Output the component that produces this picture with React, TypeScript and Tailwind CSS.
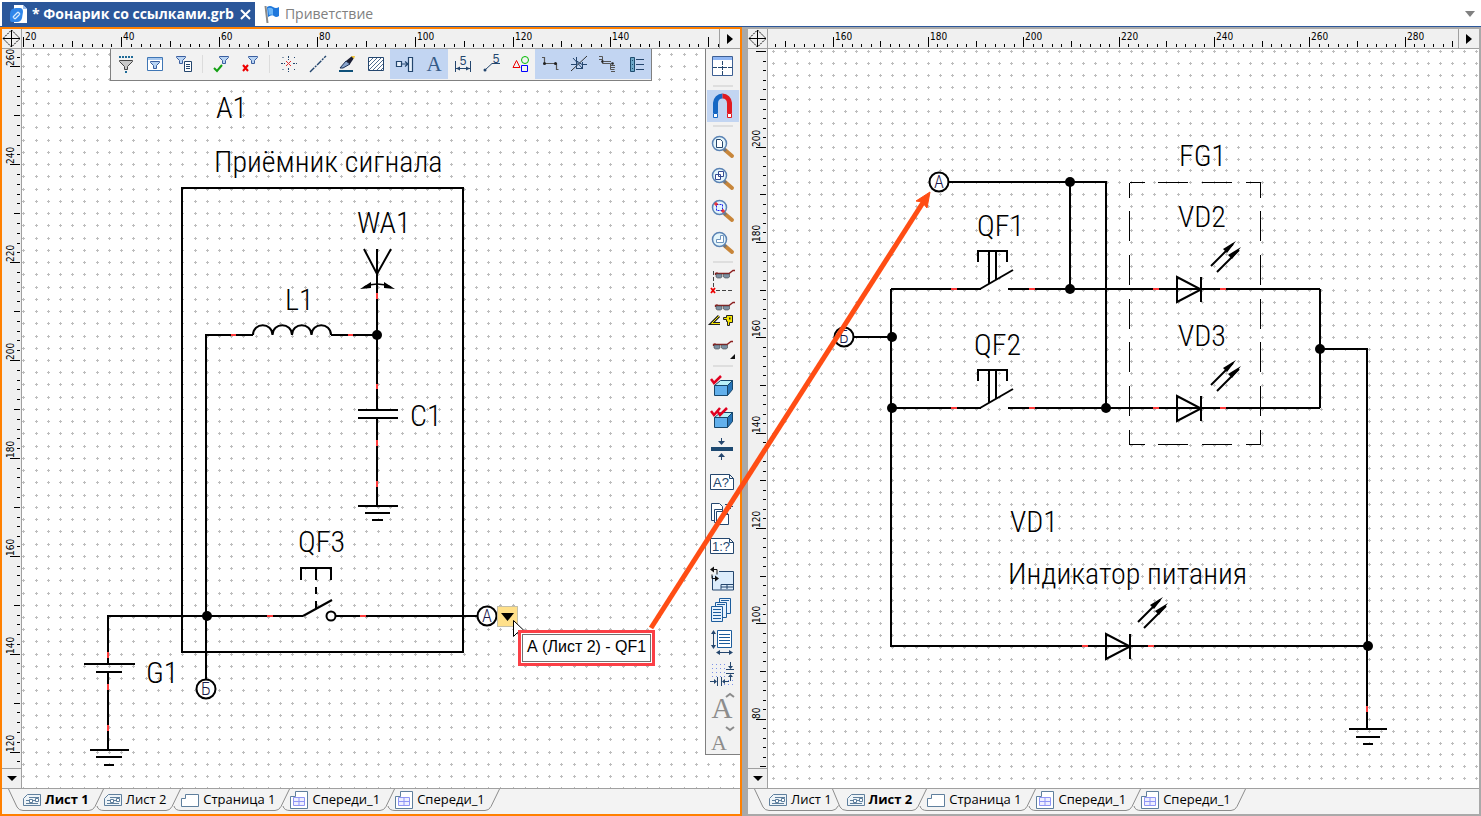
import React, {useLayoutEffect, useRef, useState} from "react";

type Tool = { name: string; icon: React.ReactNode; active?: boolean };
type Sheet = { title: string; kind: "scheme" | "page" | "view"; active?: boolean };

const INK = "#24466e";

// ---------- toolbar icons, 24x24 ----------

const Funnel = ({x = 0, y = 0}: { x?: number; y?: number }) => (
    <path
        transform={`translate(${x} ${y})`}
        d="M0.5 0.5h9v1l-3 3v3h-3v-3l-3-3z"
        fill="#b9d4f3"
        stroke="#3b5fa0"
    />
);

const filterTools: Tool[] = [
    {
        name: "Фильтр", icon: <>
            <path d="M5 5h2M8 5h2M11 5h2M14 5h2M17 5h2" stroke="#1f6a97" strokeWidth="2"/>
            <path d="M5.5 8.5h13v1l-5 5v3h-3v-3l-5-5z" fill="#c9c9c9" stroke="#444"/>
            <path d="M11 20h2" stroke="#1f6a97" strokeWidth="2"/>
        </>
    },
    {
        name: "Окно фильтра", icon: <>
            <path d="M4.5 5.5h15v13h-15z" fill="#fff" stroke="#3f76b5"/>
            <path d="M5 7h14" stroke="#a8c8ee" strokeWidth="2"/>
            <Funnel x={7} y={9}/>
        </>
    },
    {
        name: "Список фильтров", icon: <>
            <Funnel x={4} y={4}/>
            <path d="M12.5 9.5h7v10h-7z" fill="#fff" stroke={INK}/>
            <path d="M14 12.5h4M14 14.5h4M14 16.5h4" stroke={INK}/>
        </>
    },
];

const applyTools: Tool[] = [
    {
        name: "Применить фильтр", icon: <>
            <Funnel x={9} y={4}/>
            <path d="M4 16l3 3 5-6" fill="none" stroke="#13a013" strokeWidth="2"/>
        </>
    },
    {
        name: "Сбросить фильтр", icon: <>
            <Funnel x={9} y={4}/>
            <path d="M4 13l5 6M9 13l-5 6" stroke="#e00" strokeWidth="2"/>
        </>
    },
];

const drawTools: Tool[] = [
    {
        name: "Узел", icon: <>
            <path d="M11.5 4v4M11.5 16v4M4 11.5h4M16 11.5h4" stroke={INK} strokeDasharray="2 1"/>
            <path d="M9 9l5 5M14 9l-5 5" stroke="#e23030"/>
            <path d="M5.500 5.500h1M17 5.500h1M5.500 17.500h1M17 17.500h1" stroke={INK}/>
        </>
    },
    {name: "Линия", icon: <path d="M4 20L20 4" stroke={INK} strokeWidth="1.4" strokeDasharray="6 1 2 1"/>},
    {
        name: "Перо", icon: <>
            <path d="M5 16l6-7 4 3-7 4z" fill="#8ba6cf" stroke="#1b2f55"/>
            <path d="M11 9l6-5 2 2-4 6z" fill="#1b1f35"/>
            <path d="M16 4l3 3 1-3z" fill="#f3c63b"/>
            <path d="M4 19h14" stroke="#0e5079" strokeWidth="2"/>
        </>
    },
    {
        name: "Штриховка", icon: <>
            <path d="M4.5 5.5h15v13h-15z" fill="#fff" stroke={INK}/>
            <path d="M5 10l4-4M5 14l8-8M5 18l12-12M9 18l10-10M13 18l6-6M17 18l2-2" stroke={INK} strokeWidth="0.8"/>
        </>
    },
    {
        name: "Вывод", active: true, icon: <>
            <path d="M3.5 9.5h5v5h-5zM15.5 5.5h4v14h-4z" fill="#e8f1fb" stroke={INK} strokeWidth="1.2"/>
            <path d="M9 12h6M12 9.5l3 2.5-3 2.5" fill="none" stroke={INK} strokeWidth="1.2"/>
        </>
    },
    {
        name: "Текст", active: true,
        icon: <text x="12" y="19" textAnchor="middle" fontSize="21" fontFamily="Liberation Serif, serif" fill="#355b87">A</text>
    },
    {
        name: "Размер", icon: <>
            <path d="M4.5 9v11M19.5 9v11M5 16.5h14" stroke={INK}/>
            <path d="M5 16.5l4-2v4zM19 16.5l-4-2v4z" fill={INK}/>
            <text x="12" y="13" textAnchor="middle" fontSize="12" fontFamily="Liberation Sans, sans-serif" fill={INK}>5</text>
        </>
    },
    {
        name: "Выноска", icon: <>
            <path d="M5 18l7-6.5h8" fill="none" stroke={INK}/>
            <circle cx="5" cy="18" r="1.5" fill={INK}/>
            <text x="16" y="11" textAnchor="middle" fontSize="12" fontFamily="Liberation Sans, sans-serif" fill={INK}>5</text>
        </>
    },
    {
        name: "Фигуры", icon: <>
            <path d="M7.5 8.5l3.5 7h-7z" fill="none" stroke="#e00"/>
            <circle cx="16" cy="8" r="3.5" fill="none" stroke="#0b0"/>
            <path d="M12.5 13.5h6v6h-6z" fill="none" stroke="#00f"/>
        </>
    },
    {
        name: "Соединение", active: true, icon: <>
            <path d="M4 5.5h2.5v6h12v6h2" fill="none" stroke="#555" strokeWidth="1.2"/>
            <circle cx="6.5" cy="11.5" r="1.5" fill="#222"/>
            <circle cx="17.5" cy="11.5" r="1.5" fill="#222"/>
        </>
    },
    {
        name: "Разрыв", active: true, icon: <>
            <path d="M4 19L20 4" stroke="#333"/>
            <path d="M4 12.5h5M15 12.5h5M9.500 5v11M9 16.500h7M6 6l9.500 10.500V10M9 8.500l6 4" fill="none" stroke={INK}/>
        </>
    },
    {
        name: "Шина", active: true, icon: <>
            <path d="M3 4.5h3.5v5M3 7.5h3M6.5 9.5v2h8v6h4M8 9.5h7M15 13.5h4M15 15.5h4M15 19.5h4" fill="none" stroke="#555"/>
            <circle cx="6.5" cy="9.5" r="1.3" fill="#222"/>
            <circle cx="16.5" cy="11.5" r="1.3" fill="#222"/>
        </>
    },
    {
        name: "Разъём", active: true, icon: <>
            <path d="M5.5 5.5h4v14h-4z" fill="#6ea9c9" stroke="#1e4c6e"/>
            <path d="M7 8.5h1M7 12.5h1M7 16.5h1" stroke="#1e4c6e"/>
            <path d="M11 7.5h8M11 12.5h8M11 17.5h8" stroke={INK}/>
        </>
    },
];

// ---------- side bar icons, 32x32 ----------

const Lens = ({children}: { children: React.ReactNode }) => (
    <>
        <path d="M19 20l7 6" stroke="#c8863a" strokeWidth="4" strokeLinecap="round"/>
        <path d="M18 19l2 2" stroke="#777" strokeWidth="3"/>
        <circle cx="13.5" cy="13.5" r="7" fill="#e4f5fb" stroke="#5b83b4" strokeWidth="1.5"/>
        {children}
    </>
);

const Glasses = ({x = 0, y = 0}: { x?: number; y?: number }) => (
    <g transform={`translate(${x} ${y})`}>
        <path d="M0.5 5V3.5h13.5l4-3h2M0.5 3.5l2-1" fill="none" stroke="#8c1f1f" strokeWidth="1.3"/>
        <path d="M1 4h6v3l-1.5 1h-3L1 7zM8.5 4h6v3L13 8h-3L8.5 7z" fill="#7c90a3" stroke="#444" strokeWidth="0.6"/>
    </g>
);

const Cube = () => (
    <>
        <path d="M8.5 15.5l6-5h12l-5 5z" fill="#b8f0f8" stroke="#17466b"/>
        <path d="M21.5 15.5l5-5v9l-5 6z" fill="#2674b8" stroke="#17466b"/>
        <path d="M8.5 15.5h13v10h-13z" fill="#62b0ec" stroke="#17466b"/>
    </>
);

const Sign = ({text}: { text: string }) => (
    <>
        <path d="M4.5 8.5h19l4 4v11h-23zM23.5 8.5v4h4" fill="#fff" stroke={INK}/>
        <text x="15" y="21" textAnchor="middle" fontSize="13" fontFamily="Liberation Sans, sans-serif" fill={INK}>{text}</text>
    </>
);

const sideTools: Tool[][] = [
    [{
        name: "Таблица", icon: <>
            <path d="M6.5 6.5h20v19h-20z" fill="#fff" stroke="#3d5f93"/>
            <path d="M7 8.5h19" stroke="#8fb6f4" strokeWidth="3"/>
            <path d="M16.5 11v14M7 17.5h19" stroke={INK} strokeDasharray="4 1"/>
        </>
    }],
    [{
        name: "Привязка", active: true, icon: <>
            <path d="M9.500 23V13a7 7.500 0 0 1 7-7" fill="none" stroke="#1667c4" strokeWidth="5"/>
            <path d="M23.500 23V13a7 7.500 0 0 0-7-7" fill="none" stroke="#e01b22" strokeWidth="5"/>
            <path d="M7.500 23.500h4v4h-4z" fill="#fff" stroke="#1667c4"/>
            <path d="M21.500 23.500h4v4h-4z" fill="#fff" stroke="#e01b22"/>
        </>
    }],
    [
        {name: "Показать лист", icon: <Lens><path d="M10.5 9.5h4l2 2v6h-6z" fill="#fff" stroke={INK}/></Lens>},
        {name: "Показать всё", icon: <Lens><path d="M12.5 9.5h5v5h-5zM9.5 12.5h5v5h-5z" fill="#fff" stroke="#334a92"/></Lens>},
        {
            name: "Увеличить область", icon: <Lens>
                <path d="M10.5 10.5h6v6h-6z" fill="none" stroke="#22e" strokeDasharray="2 1"/>
                <path d="M8 10h4M10 8v4M15 17h4M17 15v4" stroke="#e00"/>
            </Lens>
        },
        {name: "Предыдущий вид", icon: <Lens><path d="M14.5 9.5h3v7h-7v-3h4z" fill="#fff" stroke="#6f94bd"/></Lens>},
    ],
    [
        {
            name: "Скрыть построения", icon: <>
                <path d="M7.5 5v18M10 24.5h18" stroke="#444" strokeDasharray="4 2"/>
                <Glasses x={9} y={4}/>
                <path d="M5 22l4 5M9 22l-4 5" stroke="#e00" strokeWidth="1.8"/>
            </>
        },
        {
            name: "Видимость по типу", icon: <>
                <Glasses x={9} y={4}/>
                <path d="M13 18L5.500 25.500H14" fill="none" stroke="#222" strokeWidth="3"/>
                <path d="M13 18L5.500 25.500H14" fill="none" stroke="#f6e600"/>
                <path d="M17.500 19.500h3v-2h6v7h-3v3h-2v-4h-1v-2h-3z" fill="#f6e600" stroke="#222"/>
                <path d="M23 20.500h1.500" stroke="#222" strokeWidth="2"/>
            </>
        },
        {
            name: "Видимость", icon: <>
                <Glasses x={7} y={11}/>
                <path d="M29 24v5h-5z" fill="#111"/>
            </>
        },
    ],
    [
        {name: "Проверить", icon: <><Cube/><path d="M5 9l3 4 7-7" fill="none" stroke="#e00020" strokeWidth="2.500"/></>},
        {name: "Проверить всё", icon: <><Cube/><path d="M5 9l3 4 6-7M12 10l2 3 7-7" fill="none" stroke="#e00020" strokeWidth="2.500"/></>},
        {
            name: "Толщина линий", icon: <>
                <path d="M5 15h22" stroke="#1d4971" strokeWidth="4"/>
                <path d="M15.5 4v6M15.5 26v-6" stroke={INK}/>
                <path d="M12 7h7l-3.5 4zM12 23h7l-3.5-4z" fill={INK}/>
            </>
        },
        {name: "Обозначение", icon: <Sign text="A?"/>},
        {
            name: "Копировать листы", icon: <>
                <path d="M5.5 5.500h8l3 3v14h-11z" fill="#fff" stroke={INK}/>
                <path d="M8.500 11.500h8v13h-8z" fill="#fff" stroke={INK}/>
                <path d="M10.500 13.500h9l3 3v10h-12zM19.500 13.500v3h3" fill="#fff" stroke={INK}/>
                <path d="M19 6.500h5.500V11M22 8.500h5" fill="none" stroke={INK}/>
            </>
        },
        {name: "Масштаб", icon: <Sign text="1:?"/>},
        {
            name: "Повернуть формат", icon: <>
                <path d="M6.5 14v14h21V9.5H13" fill="#dcecfb" stroke={INK}/>
                <path d="M15 27.5v-5h12M15 25h12M21 22v5" fill="none" stroke={INK}/>
                <path d="M5 7.5h6v5M12 16.5H6v-4" fill="none" stroke="#111"/>
                <path d="M4 7.5l4-3v6zM13 16.5l-4-3v6z" fill="#111"/>
            </>
        },
        {
            name: "Листы", icon: <>
                <path d="M13.5 4.5h11v15h-11z" fill="#e7f2fd" stroke="#1c5c9c"/>
                <path d="M9.500 8.500h11v15h-11z" fill="#e7f2fd" stroke="#1c5c9c"/>
                <path d="M5.500 12.500h11v15h-11z" fill="#e7f2fd" stroke="#1c5c9c"/>
                <path d="M7 15.500h8M7 18.500h8M7 21.500h8M7 24.500h8M11 10.500h8M15 6.500h8" stroke="#1c5c9c"/>
            </>
        },
        {
            name: "Размер листа", icon: <>
                <path d="M11.5 4.5h14v17h-14z" fill="#fff" stroke="#1c5c9c"/>
                <path d="M13 8.5h11M13 11.5h11M13 14.5h11M13 17.5h11" stroke="#1c5c9c"/>
                <path d="M7.5 5v17M12 26.500h13" stroke={INK}/>
                <path d="M5 8l2.5-4L10 8zM5 19l2.500 4 2.500-4zM14 24l-4 2.500 4 2.500zM23 24l4 2.500-4 2.500z" fill={INK}/>
            </>
        },
        {
            name: "Шаг сетки", icon: <>
                <path d="M6 6.5h13M6 10.5h13M6 14.5h13M6 18.5h13M18 22.5h10M18 26.5h10" stroke="#7b92e8" strokeDasharray="1 3"/>
                <path d="M20 11.5h8M20 15.5h8M24.5 4v6M24.5 17v6" stroke={INK}/>
                <path d="M22 8h5l-2.5 3zM22 19h5l-2.5-3z" fill={INK}/>
                <path d="M11.5 19v9M15.5 19v9M4 23.5h6M17 23.5h6" stroke={INK}/>
                <path d="M8 21v5l3-2.5zM19 21v5l-3-2.5z" fill={INK}/>
            </>
        },
        {
            name: "Увеличить шрифт", icon: <>
                <text x="16" y="28" textAnchor="middle" fontSize="29" fontFamily="Liberation Serif, serif" fill="#8c8c8c">A</text>
                <path d="M20 7l4-3 4 3" fill="none" stroke="#8c8c8c" strokeWidth="2"/>
            </>
        },
        {
            name: "Уменьшить шрифт", icon: <>
                <text x="13" y="28" textAnchor="middle" fontSize="22" fontFamily="Liberation Serif, serif" fill="#8c8c8c">A</text>
                <path d="M20 5l4 3 4-3" fill="none" stroke="#8c8c8c" strokeWidth="2"/>
            </>
        },
    ],
];

function TopTool({tool}: { tool: Tool }) {
    return (
        <button
            type="button"
            aria-label={tool.name}
            className={`flex h-[30px] w-[29px] items-center justify-center ${tool.active ? "bg-[#c2d5f2]" : ""}`}
        >
            <svg width="24" height="24" viewBox="0 0 24 24">{tool.icon}</svg>
        </button>
    );
}

function TopToolbar() {
    return (
        <div className="absolute top-0 left-[88px] flex border-x border-b border-[#808080] bg-[#f2f2f2] pb-px">
            {filterTools.map((t) => <TopTool key={t.name} tool={t}/>)}
            <div className="mx-1 my-1.5 w-px bg-[#dcdcdc]"/>
            {applyTools.map((t) => <TopTool key={t.name} tool={t}/>)}
            <div className="mx-1 my-1.5 w-px bg-[#dcdcdc]"/>
            {drawTools.map((t) => <TopTool key={t.name} tool={t}/>)}
        </div>
    );
}

function SideToolbar() {
    return (
        <div className="absolute top-0 right-0 flex flex-col border-b border-l border-[#808080] bg-[#f2f2f2] px-px pt-px">
            {sideTools.map((group, i) => (
                <React.Fragment key={i}>
                    {i > 0 && <div className="mx-1.5 my-[3px] h-0.5 bg-[#dedede]"/>}
                    {group.map((t) => (
                        <button
                            key={t.name}
                            type="button"
                            aria-label={t.name}
                            className={`size-8 ${t.active ? "bg-[#c2d5f2]" : ""}`}
                        >
                            <svg width="32" height="32" viewBox="1 0 32 32">{t.icon}</svg>
                        </button>
                    ))}
                </React.Fragment>
            ))}
        </div>
    );
}

// ---------- rulers and grid ----------

type Axis = { value: number; at: number; unit: number };

const rulerFont = "DejaVu Sans Condensed, DejaVu Sans, sans-serif";
const labelRoom = 22;

function useBox() {
    const ref = useRef<HTMLDivElement>(null);
    const [box, setBox] = useState({width: 0, height: 0});
    useLayoutEffect(() => {
        const el = ref.current;
        if (!el) return;
        const read = () => setBox({width: el.clientWidth, height: el.clientHeight});
        read();
        const observer = new ResizeObserver(read);
        observer.observe(el);
        return () => observer.disconnect();
    }, []);
    return {ref, ...box};
}

function ticks(axis: Axis, length: number, dir: 1 | -1) {
    const out: { pos: number; value: number }[] = [];
    for (let v = 0; v <= 800; v += 2) {
        const pos = Math.round(axis.at + dir * (v - axis.value) * axis.unit);
        if (pos >= 0 && pos < length) out.push({pos, value: v});
    }
    return out;
}

const tickSize = (value: number) => (value % 20 === 0 ? 10 : value % 10 === 0 ? 6 : 3);

function HRuler({axis}: { axis: Axis }) {
    const {ref, width} = useBox();
    return (
        <div ref={ref} className="min-w-0 flex-1">
            <svg width={width} height="19" shapeRendering="crispEdges">
                {ticks(axis, width, 1).map(({pos, value}) => (
                    <g key={value}>
                        <rect x={pos} y={18 - tickSize(value)} width="1" height={tickSize(value)}/>
                        {value % 20 === 0 && pos + labelRoom < width &&
                            <text x={pos + 2} y="11" fontSize="10" fontFamily={rulerFont}>{value}</text>}
                    </g>
                ))}
            </svg>
        </div>
    );
}

function VRuler({axis}: { axis: Axis }) {
    const {ref, height} = useBox();
    return (
        <div ref={ref} className="min-h-0 flex-1">
            <svg width="19" height={height} className="block" shapeRendering="crispEdges">
                {ticks(axis, height, -1).map(({pos, value}) => (
                    <g key={value}>
                        <rect x={18 - tickSize(value)} y={pos} width={tickSize(value)} height="1"/>
                        {value % 20 === 0 && pos >= 17 &&
                            <text transform={`translate(12 ${pos}) rotate(-90)`} fontSize="10" fontFamily={rulerFont}>{value}</text>}
                    </g>
                ))}
            </svg>
        </div>
    );
}

function GridDots({h, v}: { h: Axis; v: Axis }) {
    let d = "";
    const sx = h.unit * 2.5;
    const sy = v.unit * 2.5;
    for (let y = v.at % sy; y < 1400; y += sy) {
        for (let x = h.at % sx; x < 2200; x += sx) {
            d += `M${Math.round(x) - 1} ${Math.round(y) + 0.5}h3m-1.5-1.5v3`;
        }
    }
    return <path d={d} stroke="#bdbdbd" shapeRendering="crispEdges"/>;
}

// ---------- schematic parts ----------

const labelFont = "Roboto Condensed, Open Sans Condensed, Roboto, sans-serif";

const Label = ({x, y, children}: { x: number; y: number; children: string }) => (
    <text x={x} y={y} fontSize="30" fontWeight="300" fontFamily={labelFont}>{children}</text>
);

const Wire = ({d}: { d: string }) => <path d={d} fill="none" stroke="#000" strokeWidth="2" shapeRendering="crispEdges"/>;
const Pin = ({d}: { d: string }) => <path d={d} fill="none" stroke="#ff3b3b" strokeWidth="2" shapeRendering="crispEdges"/>;
const Dot = ({x, y}: { x: number; y: number }) => <circle cx={x} cy={y} r="5"/>;

const Link = ({x, y, children}: { x: number; y: number; children: string }) => (
    <>
        <circle cx={x} cy={y} r="9.5" fill="#fff" stroke="#000" strokeWidth="2"/>
        <text x={x} y={y + 6} textAnchor="middle" fontSize="18" fontWeight="300" fontFamily={labelFont} fill="#1a1a4a">{children}</text>
    </>
);

const Rays = ({x, y}: { x: number; y: number }) => (
    <g transform={`translate(${x} ${y})`}>
        <path d="M0 25L22 3M6 31L28 9" stroke="#000" strokeWidth="2"/>
        <path d="M25 0L12 8l4 4zM30 6L17 14l4 4z"/>
    </g>
);

const Diode = ({x, y}: { x: number; y: number }) => (
    <>
        <path d={`M${x} ${y - 12}v25l24-12.5z`} fill="none" stroke="#000" strokeWidth="2"/>
        <Wire d={`M${x + 24} ${y - 12}v25`}/>
    </>
);

const PushButton = ({y}: { y: number }) => (
    <>
        <Wire d={`M978 ${y - 27}v-11h29v11M989 ${y - 38}v33M996 ${y - 38}v29`}/>
        <path d={`M980 ${y}l33-19`} stroke="#000" strokeWidth="2"/>
        <Wire d={`M891 ${y}h90M1008 ${y}h312`}/>
        <Pin d={`M951 ${y}h6M1029 ${y}h6M1153 ${y}h6M1220 ${y}h6`}/>
    </>
);

function FirstSheet() {
    return (
        <g transform="translate(-22 -49)">
            <Wire d="M182 188h281v464H182z"/>
            <Label x={216} y={118}>A1</Label>
            <Label x={214} y={172}>Приёмник сигнала</Label>
            <Label x={357} y={233}>WA1</Label>
            <Label x={285} y={310}>L1</Label>
            <Label x={410} y={426}>C1</Label>
            <Label x={298} y={552}>QF3</Label>
            <Label x={146} y={683}>G1</Label>

            <path d="M364 249l13 25 14-25" fill="none" stroke="#000" strokeWidth="2"/>
            <path d="M364 287q13-6 27 0" fill="none" stroke="#000" strokeWidth="1.5"/>
            <path d="M360 289l11-7v6zM395 289l-11-7v6z"/>
            <Wire d="M377 249v161M206 616V335h47M331 335h46M358 410h40M358 418h40M377 418v88M358 506h40M365 513h25M372 520h11"/>
            <path d="M253 335c0-13 19.500-13 19.500 0c0-13 19.500-13 19.500 0c0-13 19.500-13 19.500 0c0-13 19.500-13 19.500 0" fill="none" stroke="#000" strokeWidth="2"/>
            <Pin d="M377 293v6M231 335h5M348 335h5M377 384v5M377 440v6M377 481v6"/>
            <Dot x={377} y={335}/>

            <Wire d="M303 616H108v48M84 664h51M96 672h26M108 672v78M90 750h39M96 757h26M104 765h10M206 616v64M336 616h141"/>
            <Wire d="M301 580v-12h30v12M316 568v12M316 587v7M316 601v7"/>
            <path d="M303 616l29-16" stroke="#000" strokeWidth="2"/>
            <circle cx="331" cy="616" r="4.5" fill="#fff" stroke="#000" strokeWidth="2"/>
            <Pin d="M267 616h6M360 616h6M108 652v6M108 684v6M108 725v6"/>
            <Dot x={207} y={616}/>
            <Link x={487} y={616}>А</Link>
            <Link x={206} y={689}>Б</Link>
        </g>
    );
}

function SecondSheet() {
    return (
        <g transform="translate(-768 -49)">
            <Label x={1179} y={166}>FG1</Label>
            <Label x={1178} y={227}>VD2</Label>
            <Label x={1178} y={346}>VD3</Label>
            <Label x={977} y={236}>QF1</Label>
            <Label x={974} y={355}>QF2</Label>
            <Label x={1010} y={532}>VD1</Label>
            <Label x={1008} y={584}>Индикатор питания</Label>

            <Wire d="M949 182h157v226M1070 182v107M854 337h37M891 289v357h477M1320 289v119M1320 349h47v380"/>
            <Wire d="M1349 729h38M1356 737h24M1363 744h10"/>
            <PushButton y={289}/>
            <PushButton y={408}/>
            <Diode x={1177} y={289}/>
            <Diode x={1177} y={408}/>
            <Diode x={1106} y={646}/>
            <Rays x={1211} y={241}/>
            <Rays x={1211} y={360}/>
            <Rays x={1138} y={597}/>
            <Pin d="M1082 646h6M1148 646h6M1367 706v6"/>
            <path
                d="M1129.5 182.5h131M1129.5 444.5h131M1129.5 182.5v262M1260.5 182.5v262"
                stroke="#000" strokeDasharray="30 13.670" strokeDashoffset="15" shapeRendering="crispEdges"
            />
            <Dot x={1070} y={182}/>
            <Dot x={1070} y={289}/>
            <Dot x={1106} y={408}/>
            <Dot x={892} y={337}/>
            <Dot x={892} y={408}/>
            <Dot x={1320} y={349}/>
            <Dot x={1368} y={646}/>
            <Link x={939} y={182}>А</Link>
            <Link x={844} y={337}>Б</Link>
        </g>
    );
}

// ---------- sheet tabs ----------

function SheetIcon({kind}: { kind: Sheet["kind"] }) {
    return (
        <svg width="18" height="18" viewBox="0 0 18 18" fill="#fff" stroke="#5f7f9d" className="shrink-0">
            {kind === "scheme" && <>
                <path d="M4.5 3.5h13v11H.5v-7z" fill="#eef4f8"/>
                <path d="M3 9.5h3M9 9.5h3M3 12.5h12M6 6.5h10" fill="none"/>
                <path d="M6.5 8.5h3v3h-3zM12.5 7.5h3v3h-3z"/>
            </>}
            {kind === "page" && <path d="M4.5 3.5h13v12H.5v-8h4z"/>}
            {kind === "view" && <>
                <path d="M5.5.5h12v17H.5v-12h5z"/>
                <path d="M3.5 6.5h11v8h-11zM9 6.5v8M3.5 10.5h11" stroke="#8f96f5" fill="#eef"/>
            </>}
        </svg>
    );
}

function SheetEdge({side}: { side: "first" | "rising" | "falling" | "last" }) {
    const d = {
        first: "M.5 0L9 18q2 3.5 6 3.5",
        rising: "M0 21.5q4 0 6-4L14.5 0M8 17q1 4.5 7 4.5",
        falling: "M.5 0L8 18q2 3.5 7 3.5M0 21.5q4 0 6.5-5",
        last: "M0 21.5q4 0 6-4L14.5 0",
    }[side];
    return <svg width="15" height="22" className="shrink-0"><path d={d} fill="none" stroke="#8c8c8c"/></svg>;
}

function SheetTabs({sheets}: { sheets: Sheet[] }) {
    return (
        <div className="flex h-[26px] shrink-0 items-start overflow-hidden border-t border-[#a0a0a0] bg-[#f3f3f3] pl-1.5 font-['Open_Sans',sans-serif] text-[13px]">
            <SheetEdge side="first"/>
            {sheets.map((s, i) => (
                <React.Fragment key={i}>
                    <button
                        type="button"
                        className={`flex h-[22px] items-center gap-1 whitespace-nowrap border-b border-[#8c8c8c] ${s.active ? "font-bold" : ""}`}
                    >
                        <SheetIcon kind={s.kind}/>
                        {s.title}
                    </button>
                    <SheetEdge side={i === sheets.length - 1 ? "last" : sheets[i + 1].active ? "falling" : "rising"}/>
                </React.Fragment>
            ))}
        </div>
    );
}

// ---------- drawing pane ----------

type PaneProps = {
    frame: string;
    h: Axis;
    v: Axis;
    sheets: Sheet[];
    drawing: React.ReactNode;
    children?: React.ReactNode;
};

function Pane({frame, h, v, sheets, drawing, children}: PaneProps) {
    return (
        <section className={`flex min-h-0 min-w-0 flex-col ${frame}`}>
            <div className="flex h-5 shrink-0 border-b border-[#a0a0a0] bg-[#f0f0f0]">
                <div className="w-5 shrink-0 border-r border-[#a0a0a0]">
                    <svg width="19" height="19" fill="none" stroke="#000">
                        <path d="M1 9.5h17M9.5 1v17"/>
                        <path d="M9.5 1L18 9.5 9.5 18 1 9.5z" strokeDasharray="2 1"/>
                    </svg>
                </div>
                <HRuler axis={h}/>
                <button type="button" aria-label="Прокрутить вправо" className="flex w-[21px] shrink-0 items-center justify-center border-l border-[#a0a0a0]">
                    <svg width="6" height="10"><path d="M0 0l6 5-6 5z"/></svg>
                </button>
            </div>
            <div className="flex min-h-0 flex-1">
                <div className="flex w-5 shrink-0 flex-col border-r border-[#a0a0a0] bg-[#f0f0f0]">
                    <VRuler axis={v}/>
                    <button type="button" aria-label="Прокрутить вниз" className="flex h-5 shrink-0 items-center justify-center border-t border-[#a0a0a0]">
                        <svg width="10" height="5"><path d="M0 0h10L5 5z"/></svg>
                    </button>
                </div>
                <div className="relative min-w-0 flex-1 overflow-hidden bg-white">
                    <svg className="block h-full w-full">
                        <GridDots h={h} v={v}/>
                        {drawing}
                    </svg>
                    {children}
                </div>
            </div>
            <SheetTabs sheets={sheets}/>
        </section>
    );
}

const sheetList = (active: number): Sheet[] => [
    {title: "Лист 1", kind: "scheme", active: active === 0},
    {title: "Лист 2", kind: "scheme", active: active === 1},
    {title: "Страница 1", kind: "page"},
    {title: "Спереди_1", kind: "view"},
    {title: "Спереди_1", kind: "view"},
];

function DocumentTabs() {
    return (
        <header className="flex h-[27px] shrink-0 items-end border-b border-[#2b579a] bg-white pl-0.5 font-['Open_Sans',sans-serif] text-sm">
            <div className="flex h-6 items-center bg-[#2b579a] pr-0.5 pl-2 font-bold text-white">
                <svg width="18" height="20" viewBox="0 0 18 20">
                    <path d="M4 1h9l4 4v14H4z" fill="#fff"/>
                    <path d="M13 1v4h4z" fill="#9dc0ef"/>
                    <path d="M0 10q0-6 6-6h4q3 0 3 4l-1 6q-1 4-5 4H2q-2 0-2-2z" fill="#2f86ea"/>
                    <path d="M3 13l5-5M5 15l5-5M3 13l2 2M8 8l2 2" stroke="#d9ecff" strokeWidth="1.2"/>
                </svg>
                <a href="#flashlight" className="pl-1 text-sm">* Фонарик со ссылками.grb</a>
                <button type="button" aria-label="Закрыть" className="ml-1 p-0.5">
                    <svg width="11" height="11"><path d="M1 1l9 9M10 1l-9 9" stroke="#fff" strokeWidth="2"/></svg>
                </button>
            </div>
            <a href="#welcome" className="flex h-6 items-center gap-1 pl-2 text-[#808080]">
                <svg width="18" height="20" viewBox="0 0 18 20">
                    <path d="M2.5 2l2 17" stroke="#8a8a8a" strokeWidth="2"/>
                    <path d="M4 3q3-2 6 0t6 0v9q-3 2-5 0t-6 1z" fill="#1f78dc"/>
                    <path d="M5 4q3-1 5 1v6q-2-1-4 0z" fill="#6bb5f7"/>
                </svg>
                Приветствие
            </a>
            <button type="button" aria-label="Список окон" className="ml-auto flex h-6 items-center pr-1.5">
                <svg width="10" height="6"><path d="M0 0h10L5 6z" fill="#808080"/></svg>
            </button>
        </header>
    );
}

export default function App() {
    return (
        <div className="flex h-screen w-full flex-col overflow-hidden bg-white text-black">
            <DocumentTabs/>
            <main className="relative grid min-h-0 flex-1 grid-cols-[742fr_733fr] gap-1.5 bg-[#a9a9a9]">
                <Pane
                    frame="border-2 border-[#ff8000]"
                    h={{value: 20, at: 1.3, unit: 4.892}}
                    v={{value: 260, at: 17.3, unit: 4.895}}
                    sheets={sheetList(0)}
                    drawing={<FirstSheet/>}
                >
                    <TopToolbar/>
                    <SideToolbar/>
                    <button type="button" aria-label="Перейти по ссылке" className="absolute top-[557px] left-[475px] flex size-[21px] items-center justify-center border border-[#c4bfa8] bg-[#ffe08a]">
                        <svg width="13" height="8"><path d="M0 0h13L6.5 8z"/></svg>
                    </button>
                    <svg width="12" height="20" className="absolute top-[571px] left-[491px]">
                        <path d="M.5.5v16l4-4 3 7 2.5-1-3-7h5z" fill="#fff" stroke="#000"/>
                    </svg>
                    <div role="tooltip" className="absolute top-[581px] left-[496px] border-[3px] border-[#fb3f46] bg-white p-px">
                        <div className="border border-[#707070] px-1 pb-0.5 font-['Liberation_Sans',sans-serif] text-base leading-6 whitespace-nowrap">
                            А (Лист 2) - QF1
                        </div>
                    </div>
                </Pane>
                <Pane
                    frame="border-y-2 border-r-2 border-[#a9a9a9]"
                    h={{value: 160, at: 64.6, unit: 4.767}}
                    v={{value: 220, at: 2.3, unit: 4.767}}
                    sheets={sheetList(1)}
                    drawing={<SecondSheet/>}
                />
                <svg className="pointer-events-none absolute inset-0 h-full w-full">
                    <g transform="translate(0 -27)" fill="#ff4d14">
                        <path d="M651 628L924 201" stroke="#ff4d14" strokeWidth="5"/>
                        <path d="M930 192l-14 9 6 1 5 6z" stroke="#ff4d14"/>
                    </g>
                </svg>
            </main>
        </div>
    );
}
